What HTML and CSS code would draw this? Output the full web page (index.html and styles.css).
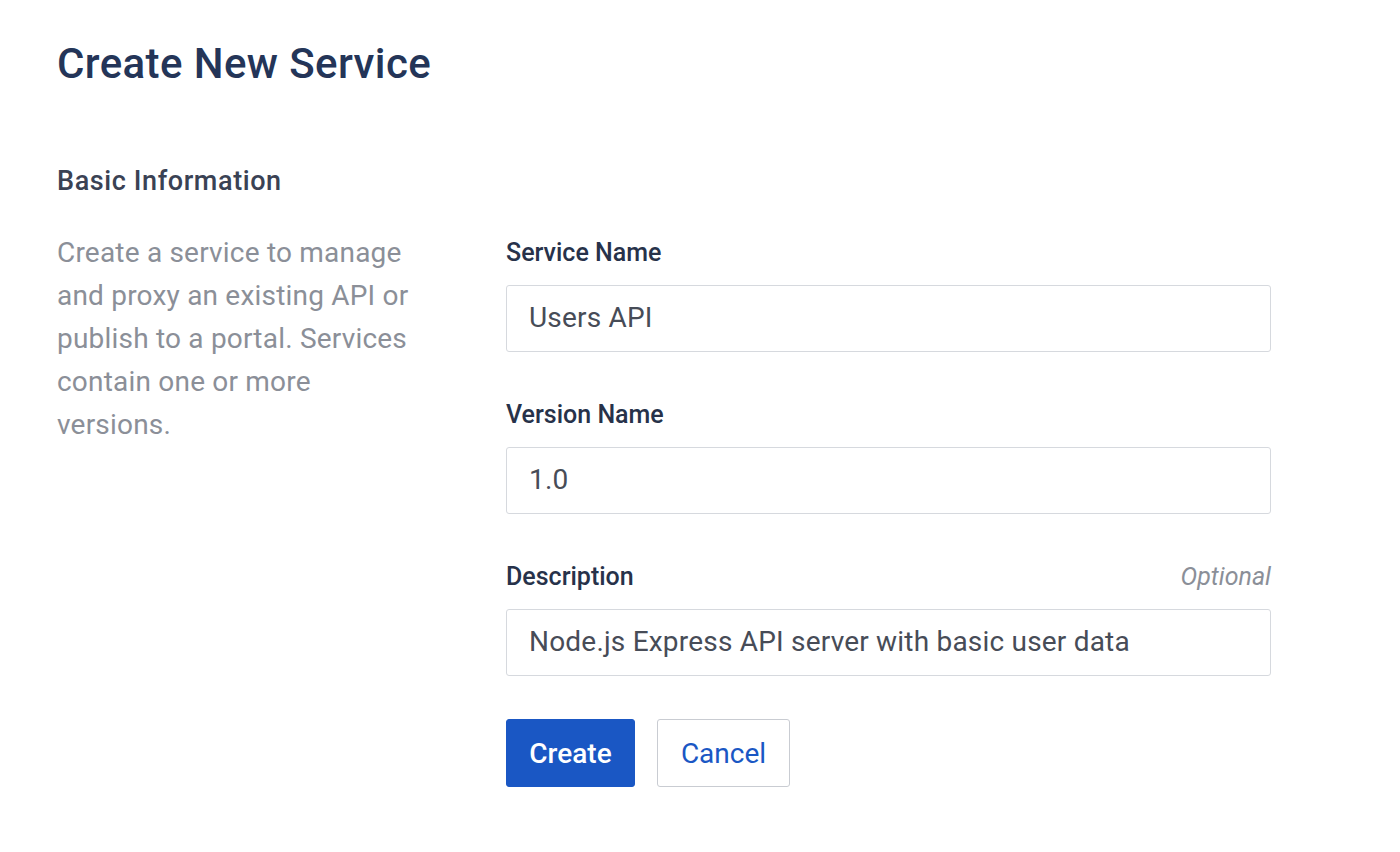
FILE: index.html
```html
<!DOCTYPE html>
<html lang="en">
<head>
<meta charset="utf-8">
<title>Create New Service</title>
<link rel="stylesheet" href="styles.css">
</head>
<body>
<main class="page">
  <h1 class="title">Create New Service</h1>
  <h2 class="section-title">Basic Information</h2>
  <div class="section">
    <p class="section-desc">Create a service to manage and proxy an existing API or publish to a portal. Services contain one or more versions.</p>
    <form class="form">
      <div class="field">
        <div class="label-row"><label class="label">Service Name</label></div>
        <div class="input">Users API</div>
      </div>
      <div class="field">
        <div class="label-row"><label class="label">Version Name</label></div>
        <div class="input">1.0</div>
      </div>
      <div class="field">
        <div class="label-row"><label class="label">Description</label><span class="optional">Optional</span></div>
        <div class="input">Node.js Express API server with basic user data</div>
      </div>
      <div class="actions">
        <button type="button" class="btn btn-primary">Create</button>
        <button type="button" class="btn btn-secondary">Cancel</button>
      </div>
    </form>
  </div>
</main>
</body>
</html>
```
FILE: styles.css
```css
* { box-sizing: border-box; }
html, body { margin: 0; padding: 0; background: #ffffff; }
body { font-family: Roboto, "Liberation Sans", Arial, sans-serif; }
.page { padding: 39px 0 0 57px; width: 1271px; }
.title {
  margin: 0;
  font-size: 42px;
  font-weight: 500;
  letter-spacing: 0.4px;
  color: #243558;
  line-height: 50px;
}
.section-title {
  margin: 76px 0 0 0;
  font-size: 27px;
  font-weight: 500;
  letter-spacing: 0.6px;
  color: #3a4254;
  line-height: 32px;
}
.section {
  display: flex;
  margin-top: 34px;
}
.section-desc {
  margin: 0;
  width: 360px;
  flex: none;
  font-size: 28px;
  letter-spacing: 0.2px;
  line-height: 43px;
  color: #8b8f98;
}
.form {
  margin-left: 89px;
  flex: 1;
  padding-top: 7px;
}
.field { margin-bottom: 48px; }
.field:nth-child(3) { margin-bottom: 43px; }
.label-row {
  display: flex;
  justify-content: space-between;
  align-items: baseline;
  height: 30px;
  line-height: 30px;
  margin-bottom: 17px;
}
.label {
  font-size: 25px;
  font-weight: 500;
  color: #27324a;
}
.optional {
  font-size: 25px;
  font-style: italic;
  color: #8b8f98;
}
.input {
  height: 67px;
  border: 1px solid #d6d9de;
  border-radius: 3px;
  padding: 0 22px 3px;
  display: flex;
  align-items: center;
  font-size: 28px;
  letter-spacing: 0.2px;
  color: #474c57;
}
.actions { display: flex; gap: 22px; }
.btn {
  height: 68px;
  border-radius: 3px;
  font-family: inherit;
  font-size: 28px;
  padding: 0;
  cursor: pointer;
}
.btn-primary {
  width: 129px;
  background: #1a57c4;
  border: 1px solid #1a57c4;
  color: #ffffff;
  font-weight: 500;
}
.btn-secondary {
  width: 133px;
  background: #ffffff;
  border: 1px solid #c9ccd2;
  color: #1a57c4;
}
```
